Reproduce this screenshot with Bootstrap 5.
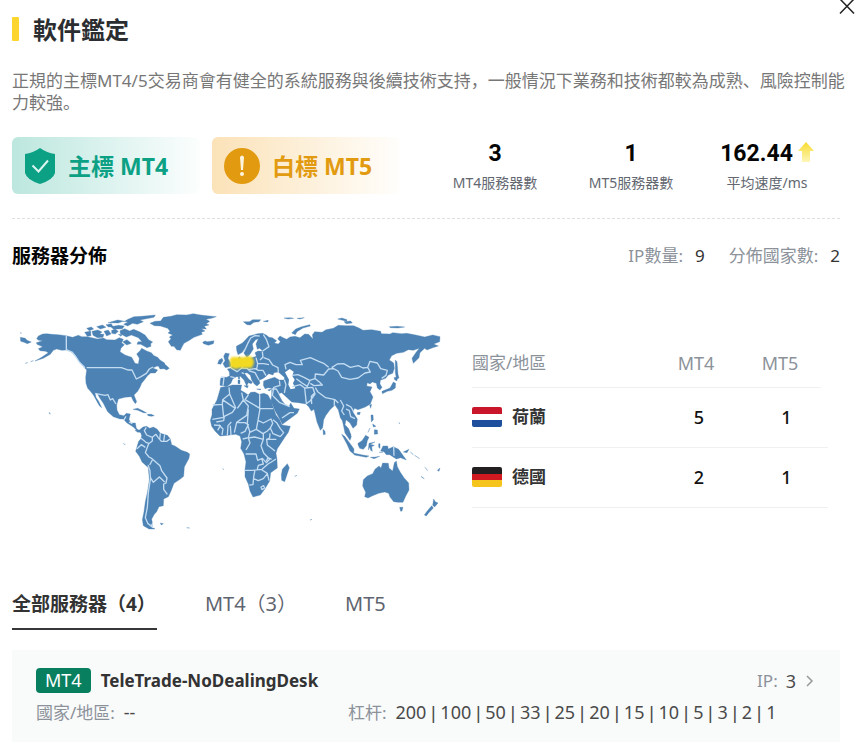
<!DOCTYPE html>
<html lang="zh-CN">
<head>
<meta charset="utf-8">
<meta name="viewport" content="width=device-width, initial-scale=1">
<title>軟件鑑定</title>
<link href="https://cdn.jsdelivr.net/npm/bootstrap@5.3.0/dist/css/bootstrap.min.css" rel="stylesheet">
<style>
body{font-family:"Noto Sans","Noto Sans CJK SC",sans-serif;font-size:17px;line-height:24px;color:#333;background:#fff}
.sheet{padding:0 12px}
.inset{margin-right:11px}
.close-btn{width:18px;height:16px;line-height:0;margin-right:-5px;color:#222}
.title-row{gap:14px;height:24px;margin-top:1px}
.title-bar{width:7px;height:24px;background:#fdd52f;border-radius:1px}
.title-text{font-size:24px;line-height:28px;padding-top:2px;color:#2b2d30}
.intro{line-height:22px;color:#777;margin:29px 0 23px}
.seals{gap:12px}
.seal{width:188px;height:57px;border-radius:6px;font-size:23px;gap:12px;padding-left:12px}
.seal-main{background:linear-gradient(90deg,#bce7de,#fcfefe);color:#0ca085}
.seal-white{background:linear-gradient(90deg,#fbe2b8,#fffefc);color:#e29b10}
.figures{padding-right:5px}
.figure-item{width:136px;text-align:center}
.figure-num{font:700 23px/28px Roboto,sans-serif;color:#050505;gap:5px;margin-top:3px}
.figure-label{font-size:14px;line-height:20px;color:#626770;margin-top:5px}
.divider{border-top:1px dashed #dfe1e1;margin-top:24px}
.sub-title{font-size:19px;line-height:24px;color:#050505}
.muted{color:#8c929a}
.dist-row{margin-top:25px}
.pair{gap:12px}
.map-row{margin-top:32px;gap:30px}
.map-box{flex:0 1 430px}
.map-box svg{width:100%;height:auto}
.land{fill:#4c82b4;stroke:#4c82b4;stroke-width:1;stroke-linejoin:round}
.borders{fill:none;stroke:#c3dcf2;stroke-width:4;stroke-linejoin:round}
.sea{fill:#fff}
.region-table{flex:1 1 0;margin:39px 23px 0 0}
.region-table table{width:100%;table-layout:fixed}
.region-table th{height:48px;font-weight:400;color:#8c929a}
.region-table td{height:60px;color:#111;font-size:18px;font-weight:500}
.region-table tr>*{border-bottom:1px solid #f0f0f0;padding:0}
.region-table tr>.bare{border:0;height:auto}
.region-table .latin{font-size:18px}
.region-table th.latin{padding-left:2px}
.region-table td.latin{padding-left:8px}
.region-table .place{color:#333;font-size:17px;font-weight:600}
.region-table .flag-row{gap:10px}
.tabs-row{margin-top:52px;gap:48px}
.tab-btn{border:0;background:none;padding:0 0 12px;font-size:20px;line-height:24px;color:#5f6570;border-bottom:2px solid transparent}
.tab-btn.on{font-size:19px;font-weight:700;color:#333;border-color:#36373b;padding-right:1px}
.server{background:#f9fafa;margin-top:20px;padding:18px 24px 17px}
.plat{background:#087f5f;color:#fff;border-radius:4px;font-size:18px;line-height:25px;padding:0 9px;margin-right:10px}
.server-name{font-size:17px;color:#333}
.half{flex:0 0 312px}
.detail-row{margin-top:7px}
.val{font-size:18px;color:#4a4a4a}
.val i{font-family:"Liberation Sans",sans-serif;font-style:normal}
.more{color:#555;text-decoration:none}
</style>
</head>
<body>
<main class="sheet">
  <div class="d-flex justify-content-end"><button class="close-btn btn p-0 border-0" aria-label="關閉"><svg width="18" height="16" viewBox="0 0 18 16"><path d="M2-1l14 14.500M16-1L2 13.500" stroke="currentColor" stroke-width="1.500" fill="none"/></svg></button></div>
  <div class="title-row d-flex align-items-center"><span class="title-bar"></span><h1 class="title-text fw-bold mb-0">軟件鑑定</h1></div>
  <p class="intro">正規的主標MT4/5交易商會有健全的系統服務與後續技術支持，一般情況下業務和技術都較為成熟、風險控制能力較強。</p>

  <section class="inset d-flex justify-content-between align-items-start">
    <div class="seals d-flex">
      <div class="seal seal-main d-flex align-items-center fw-bold"><svg width="32" height="38" viewBox="0 0 32 38"><path d="M16 1q7 5 15 6v19q-2 7-15 11Q3 33 1 26V7q8-1 15-6z" fill="currentColor"/><path d="M8.500 18.500l6 6 9.500-11" fill="none" stroke="#ddf5ef" stroke-width="2"/></svg><span>主標 MT4</span></div>
      <div class="seal seal-white d-flex align-items-center fw-bold"><svg width="36" height="38" viewBox="0 0 36 38"><circle cx="18" cy="19" r="18" fill="currentColor"/><path d="M16 10q2-3 4 0l-1 13h-2z" fill="#fff5df"/><circle cx="18" cy="27" r="2" fill="#fff5df"/></svg><span>白標 MT5</span></div>
    </div>
    <div class="figures d-flex">
      <div class="figure-item"><div class="figure-num">3</div><div class="figure-label">MT4服務器數</div></div>
      <div class="figure-item"><div class="figure-num">1</div><div class="figure-label">MT5服務器數</div></div>
      <div class="figure-item"><div class="figure-num d-flex justify-content-center align-items-center"><span>162.44</span><svg width="16" height="24" viewBox="0 0 16 24"><defs><linearGradient id="up" x2="0" y2="1"><stop stop-color="#f8db2e"/><stop offset="1" stop-color="#fdf6b8"/></linearGradient></defs><path d="M8 0l8 9h-4v11H4V9H0z" fill="url(#up)"/></svg></div><div class="figure-label">平均速度/ms</div></div>
    </div>
  </section>
  <div class="divider inset"></div>

  <section class="dist-row inset d-flex justify-content-between align-items-center">
    <h2 class="sub-title fw-bold mb-0">服務器分佈</h2>
    <div class="d-flex gap-4"><div class="pair d-flex"><span class="muted">IP數量:</span><span>9</span></div><div class="pair d-flex"><span class="muted">分佈國家數:</span><span>2</span></div></div>
  </section>

  <section class="map-row d-flex align-items-start">
    <div class="map-box">
      <svg class="d-block" viewBox="12 300 430 240" role="img" aria-label="世界地圖">
        <defs><filter id="soft" x="-20%" y="-30%" width="140%" height="160%"><feGaussianBlur stdDeviation="1"/></filter></defs>
        <!-- North America -->
        <g transform="translate(10 300) scale(.33333)">
          <path class="land" d="M85 108L98 102 110 101 125 103 145 104 168 107 188 112 205 106 215 110 232 110 262 117 280 114 290 119 315 120 328 113 340 118 335 128 343 134 333 145 330 155 345 165 365 172 375 190 385 192 388 175 380 162 390 152 395 145 410 153 424 158 432 167 443 172 450 180 465 190 458 196 440 199 428 204 443 210 436 219 422 219 412 228 403 240 395 250 390 262 383 274 372 285 380 305 376 311 370 303 364 290 345 292 325 297 320 315 321 330 328 344 342 347 349 340 361 342 357 358 362 369 376 369 379 385 389 393 400 392 397 398 385 396 370 381 350 368 340 357 330 357 310 350 293 335 280 310 268 292 262 280 255 278 258 292 266 304 275 323 268 317 250 285 240 272 233 265 228 250 227 232 230 210 215 194 205 180 195 165 183 155 170 150 155 151 140 147 130 151 121 163 100 175 75 183 95 172 115 158 107 154 90 152 85 146 98 140 81 133 79 128 98 122 86 121 80 116Z
          M31 112L46 115 51 121 64 126 52 131 42 127 32 124Z
          M224 97L242 93 243 107 232 109ZM246 94L264 90 276 96 269 102 282 103 279 112 262 113 249 106ZM230 85l14-4 7 6-13 5zM260 80l17-5 11 7-17 5zM288 74l16-3 5 9-14 1zM282 94l13-4 8 12-13 6zM305 91l11-3 9 6-9 8-11-2zM302 80l24-4 17 2-6 8-26 2zM294 68l29-8 21 4 10-6 18-8 23-1 41-4-4 7-27 5-15 3 10 5-18 8-14-3-15 8-12-5 13-7-15-2-14 5zM330 92l14-6 15 7 12-5 19 8 15 9 11 14 12 7-6 5 1 8-12 4-19-10-11 0 3-8 12 0-11-12-21-8-15 6-18-10zM338 125l13-6 13 11-14 5zM325 103l11 1-3 5z"/>
          <path class="land" d="M444 196l12-8 9 5 13 12-8 5-8-4-12 1zM369 328l14-3 17 8 10 6-10-1-16-7zM412 343l12 0 9 4-9 2-10-2zM117 337l4 4-1 2zM46 190l7-2zM62 185l8-3zM30 98l5 2z"/>
          <path class="borders" d="M169 107V149L186 156 198 171 207 185 225 203M230 203H334L353 210 366 210 379 237 393 230 409 220 418 207 429 201M258 281L285 286 294 284 301 300 308 296 318 312M341 361L348 349M357 366L367 371"/>
        </g>
        <!-- Greenland, Iceland and South America -->
        <g transform="translate(120 300) scale(.33333)">
          <path class="land" d="M90 70L105 64 122 63 130 52 153 49 170 44 200 45 220 41 242 45 268 48 289 50 274 55 258 58 269 64 259 71 267 75 253 79 259 87 244 86 255 93 244 97 247 103 222 112 206 122 192 130 187 139 181 151 170 149 162 139 154 139 145 125 153 116 148 111 158 105 144 99 150 94 143 85 121 78 103 77ZM248 127L255 123 262 125 282 122 280 131 265 136 251 131Z
          M45 391L53 397 61 395 65 407 63 416 56 424 51 440 47 454 58 469 66 486 85 503 88 540 83 573 76 605 72 635 67 659 70 677 87 687 105 687 91 679 97 669 95 657 103 643 110 635 117 620 130 617 131 597 145 590 153 573 162 550 180 538 191 529 193 501 207 475 209 462 202 457 184 451 165 438 155 434 151 417 142 406 121 400 111 387 100 381 89 385 80 379 69 381 57 391Z
          M121 669l9 2-6 4zM200 683l9 1zM10 431l6 3z"/>
          <path class="borders" d="M79 382L73 392 80 405 97 412 97 423 86 431 76 458 87 471 96 476 120 497 125 512 141 534 138 549 131 552 131 568 142 583M97 412L108 403 114 412 124 424 140 424 150 417M121 400L119 420M134 403L131 423M63 415L78 427 89 431M50 447L64 434 76 442M84 495L90 512 91 532 100 547 118 531 134 546M92 532L85 578 82 622 76 653 84 671 98 681M97 684V671M89 495L97 480"/>
        </g>
        <!-- Eurasia -->
        <g transform="translate(200 300) scale(.33333)">
          <path class="land" d="M110 151L109 139 120 133 127 129 136 120 147 108 160 105 173 101 188 100 200 106 207 112 217 113 230 122 223 129 235 132 241 125 233 116 240 108 251 114 260 118 270 111 285 109 300 113 314 102 326 103 339 117 337 104 344 95 366 97 378 89 400 85 415 76 438 77 461 77 477 84 489 91 515 89 542 94 544 101 570 102 578 98 605 101 620 100 647 105 674 111 698 105 720 110 719 125 701 132 715 138 698 143 681 150 674 145 660 158 657 173 640 190 636 175 649 156 658 145 640 151 625 149 610 157 590 160 575 167 568 180 581 189 583 205 578 220 565 225 557 235 541 241 540 252 546 262 540 270 532 264 529 250 517 246 510 252 502 248 500 258 516 261 510 275 519 291 511 312 496 321 474 329 464 325 458 335 472 357 470 375 459 385 450 369 438 359 435 374 446 387 454 410 450 421 435 399 430 375 427 362 421 353 415 330 405 315 390 329 377 347 371 359 368 383 361 391 351 366 342 328 334 333 326 320 318 312 295 308 275 306 258 290 245 278 235 281 246 302 256 314 267 320 272 309 282 325 298 327 292 340 270 356 247 373 239 357 225 332 213 302 215 285 215 265 204 263 195 266 190 256 191 243 208 237 224 232 238 240 253 240 253 232 235 216 222 218 219 225 206 221 197 230 187 237 177 241 180 250 171 258 163 252 155 240 151 226 141 218 133 220 146 237 157 246 154 251 145 248 140 258 132 240 121 229 109 230 98 237 93 250 80 260 67 257 60 256 61 240 64 231 80 232 89 227 88 216 82 207 93 205 100 192 110 183 118 170 124 178 150 175 169 169 165 158 174 153 189 154 179 145 172 148 168 132 175 116 167 119 157 132 160 147 151 161 141 173 132 160 134 145 127 157 114 164Z
          M69 191l6-9-4-13 5-10 12 2-4 14 9 16 0 8-17 4zM57 180l9-5 3 7-7 11-9-2zM130 65l18 0 10-6 24 0-5 6-15 2-11 8-10-1zM190 64l15-3-2 5zM252 54l20-1 9 2-17 2zM291 55l22-2-14 4zM275 99l12-12 18-7 24-6 2 4-22 6-18 11-5 9zM413 57l13-3 15 5-1 5zM432 65l20-2 5 6-18 2zM568 80l23-1 23 2-20 3-23-1z
          M586 180l5 5 3 38 3 11-7 4-4-19zM582 233l10-3-1 13-7-4zM580 246l7 4-1 14-10 7-14 3-15 7-1-7 24-10zM369 388l6 6 1 9-6 1zM509 315l6-2-3 12zM473 337l8 0-2 7-8-1zM114 240l6 0 0 11-6 0zM115 226l4 2 0 9-4 0zM132 257l13 0-3 7zM170 267l12 0-1 3zM203 270l12-4-7 7z"/>
          <path class="sea" d="M255 217L269 207 281 215 277 228 284 239 279 250 286 265 272 268 265 254 267 239Z"/>
          <path class="borders" d="M132 155L143 131 152 114 165 107 179 108M190 104L199 118 207 140 188 153M187 155L189 171 180 180M191 173L207 179 218 195 234 203 235 217M168 173L173 191 170 207M173 191H191L207 194M129 181L126 203 111 215 93 204M143 209L166 206 175 211 189 211 198 227M126 204L141 205 149 213 165 218 177 240M125 218L132 221M62 232H72L69 257M91 230L104 233M258 208L255 194 270 187 288 194 307 194 301 181 331 173 356 184 371 190 386 202M276 226L294 224 312 232 329 241 345 236 346 222 371 225 386 207 400 206M289 236L306 249 322 259 331 239M346 236L359 247 367 255 342 257 331 250M277 260L301 254 314 264 319 311M314 264L338 262 345 282 330 303 318 312M346 263L353 275 377 293 405 299 415 309M343 280L334 289 335 312M395 203L414 213 425 232 450 238 474 234 495 219 511 216 503 202 489 204 475 197 451 202 431 191 412 192 395 203M503 202L510 184 532 189 542 206 562 211 558 226 545 235M403 298L403 317M421 300L431 318 425 333 433 345M438 313L453 321 461 335M438 327L448 332 452 350 465 356M253 239L258 254 253 279M238 242L240 256 221 262 217 288M216 267L229 267 237 281M219 288L238 307 269 320M246 354L270 338 282 338"/>
        </g>
        <!-- Africa -->
        <g transform="translate(200 380) scale(.33333)">
          <path class="land" d="M62 22L80 20 97 15 110 15 125 15 122 31 133 37 145 45 152 37 165 36 178 43 192 40 204 45 215 65 219 80 228 105 239 119 246 135 271 139 265 157 253 174 242 191 232 206 228 220 231 238 232 264 212 278 209 303 195 326 181 345 170 348 159 351 150 333 145 312 135 290 135 268 138 246 132 222 122 205 125 185 120 168 107 163 90 165 72 167 60 168 45 153 35 139 31 121 36 104 36 88 51 60ZM262 251L268 263 261 284 254 305 245 301 244 284 247 268ZM68 266l4 3zM284 289l7-3z"/>
          <path class="borders" d="M87 22L89 42 68 59 67 73 38 75M67 73L71 112 37 118M89 42L107 83 97 97 73 109 71 122 49 126M67 59L107 86M125 38L130 60 112 85M130 60L145 78 140 106 110 127M145 45L135 59 180 85M179 43V86H219M180 86L174 121 169 148 149 157 145 173 128 177M145 88L142 132 150 157M110 127L103 158M108 128H135L145 134 135 154 122 160M93 165L91 137M82 166L84 137 94 126M66 165L69 147 56 134M53 151L61 137 42 135M174 121L190 129 213 117 218 130 211 144 219 161 241 170M169 148L189 161 202 153 211 144M241 170L251 158 241 146 230 128 219 119M190 161L190 178 183 197 191 219 209 238 199 248 187 235 173 241 168 222H137M145 174L150 189 138 210M144 174L164 171 190 178M210 160L209 174 200 178 202 195 225 213M200 178H229M134 271H158L186 268 204 252 214 246 228 237M165 270L161 291 159 314 148 315M161 296L175 302 190 296 203 280M186 270L202 280 207 302M199 243L204 233 215 238M185 235L190 252 175 256 171 271M183 321L191 317 194 324 186 329Z"/>
        </g>
        <!-- Oceania and the islands of South-East Asia -->
        <g transform="translate(310 300) scale(.33333)">
          <path class="land" d="M160 539L172 528 188 521 195 508 207 498 213 504 218 489 235 490 237 504 248 513 253 488 259 483 262 500 271 517 282 533 296 549 297 570 287 589 279 607 264 607 251 605 240 591 236 580 224 576 206 580 188 587 174 594 164 590 167 577 158 558ZM269 622l10 0-3 11-4 1zM371 597l5 8 8 4-10 12-6-5zM365 617l5 7-15 16-6 8-6-3 7-10z
          M95 403l9 6 19 25 9 13-1 15-11-9-9-20zM108 379l7 7 8 20-4 0zM130 459l28 6 19 3-8 4-36-7zM144 430l12-8 11-16 10 6-5 10-3 15-9 11-11-3-5-11zM177 430l18-4-8 4-7 3 13 3-8 4 2 14-5-3-3-10-4 9zM183 345l6 0 1 14-6 7zM188 372l10 7-8 2zM193 389l9 1 1 12-10 1zM180 384l-6 13zM206 431l4 0 0 14-4-3zM219 438l14 0 2 9 15-7 16 8 10 14 13 18-17-7-13 4-20-13-10 0-7-9-10-2zM181 472l16-1 12-2-17 7zM207 457l12 0zM280 456l17-8-6 10zM301 456l9 8zM314 466l15 10zM333 529l10 7-6-3zM382 511l8-7-3 10zM345 502l8 10zM267 367l2 5zM0 660l6-2z"/>
          <path class="borders" d="M251 441L252 467"/>
        </g>
        <!-- Highlighted server locations -->
        <g fill="#f3da20" filter="url(#soft)"><rect x="230" y="357" width="23" height="11" rx="3"/><circle cx="236" cy="363" r="6"/><circle cx="248" cy="362" r="6"/></g>
      </svg>
    </div>
    <div class="region-table">
      <table>
        <colgroup><col><col style="width:84px"><col style="width:84px"><col style="width:7px"></colgroup>
        <thead><tr><th scope="col">國家/地區</th><th scope="col" class="latin text-center">MT4</th><th scope="col" class="latin text-center">MT5</th><td class="bare"></td></tr></thead>
        <tbody>
          <tr><td class="place"><div class="flag-row d-flex align-items-center"><svg width="30" height="20" viewBox="0 0 30 20"><clipPath id="f"><rect width="30" height="20" rx="2"/></clipPath><g clip-path="url(#f)"><path d="M0 0h30v7H0z" fill="#c9162b"/><path d="M0 7h30v6H0z" fill="#fff"/><path d="M0 13h30v7H0z" fill="#1d4f9d"/></g></svg><span>荷蘭</span></div></td><td class="latin text-center">5</td><td class="latin text-center" colspan="2">1</td></tr>
          <tr><td class="place"><div class="flag-row d-flex align-items-center"><svg width="30" height="20" viewBox="0 0 30 20"><g clip-path="url(#f)"><path d="M0 0h30v7H0z" fill="#231f20"/><path d="M0 7h30v6H0z" fill="#d01a20"/><path d="M0 13h30v7H0z" fill="#f5c51d"/></g></svg><span>德國</span></div></td><td class="latin text-center">2</td><td class="latin text-center" colspan="2">1</td></tr>
        </tbody>
      </table>
    </div>
  </section>

  <div class="tabs-row d-flex" role="tablist">
    <button class="tab-btn on" role="tab" aria-selected="true">全部服務器（4）</button>
    <button class="tab-btn" role="tab" aria-selected="false">MT4（3）</button>
    <button class="tab-btn" role="tab" aria-selected="false">MT5</button>
  </div>

  <article class="server inset">
    <div class="d-flex align-items-center">
      <span class="plat">MT4</span><strong class="server-name">TeleTrade-NoDealingDesk</strong>
      <a href="#ip" class="more ms-auto d-flex align-items-center"><span class="muted me-2">IP:</span><span class="val">3</span><svg class="ms-2" width="12" height="14" viewBox="0 0 12 14"><path d="M3 2l5 5-5 5" fill="none" stroke="#999" stroke-width="1.500"/></svg></a>
    </div>
    <div class="detail-row d-flex">
      <div class="half"><span class="muted">國家/地區:</span>&nbsp; <span class="val">--</span></div>
      <div class="text-nowrap"><span class="muted">杠杆:</span>&nbsp; <span class="val">200 <i>|</i> 100 <i>|</i> 50 <i>|</i> 33 <i>|</i> 25 <i>|</i> 20 <i>|</i> 15 <i>|</i> 10 <i>|</i> 5 <i>|</i> 3 <i>|</i> 2 <i>|</i> 1</span></div>
    </div>
  </article>
</main>
<script src="https://cdn.jsdelivr.net/npm/bootstrap@5.3.0/dist/js/bootstrap.bundle.min.js"></script>
</body>
</html>
